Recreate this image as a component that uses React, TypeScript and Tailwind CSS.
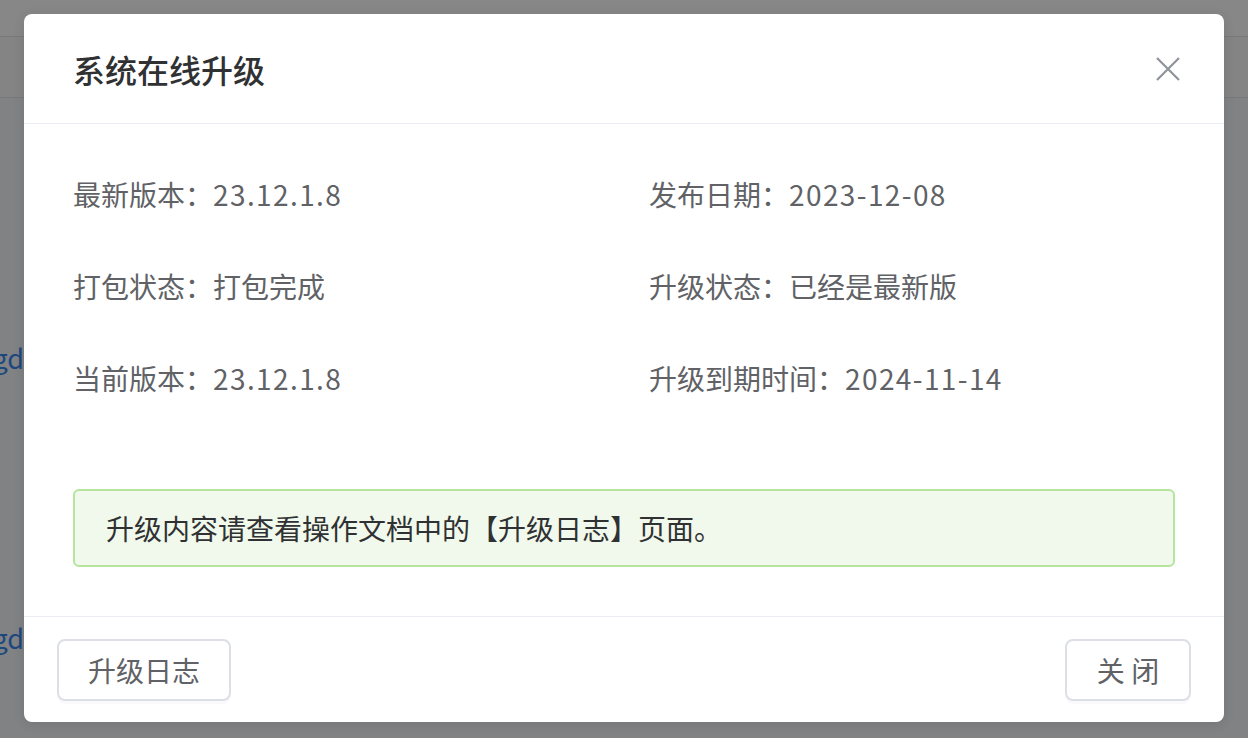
type Item = { label: string; value: string; num?: boolean };

const rows: [Item, Item][] = [
  [
    { label: "最新版本：", value: "23.12.1.8", num: true },
    { label: "发布日期：", value: "2023-12-08", num: true },
  ],
  [
    { label: "打包状态：", value: "打包完成" },
    { label: "升级状态：", value: "已经是最新版" },
  ],
  [
    { label: "当前版本：", value: "23.12.1.8", num: true },
    { label: "升级到期时间：", value: "2024-11-14", num: true },
  ],
];

const font = { fontFamily: '"Noto Sans CJK SC", "Noto Sans", sans-serif' };

function Field({ item }: { item: Item }) {
  return (
    <span>
      {item.label}
      <span className={item.num ? "tracking-[1.4px]" : ""}>{item.value}</span>
    </span>
  );
}

function PageBehind() {
  return (
    <div className="flex flex-col h-full bg-[#f4f5f7]">
      <div className="h-[37px] bg-white border-b border-[#e4e4e4]" />
      <div className="h-[61px] bg-[#fafafa] border-b border-[#e4e4e4]" />
      <div className="flex flex-col pt-[240px] text-[27px] text-[#3a86f0]">
        <div className="h-[40px] flex items-center">
          <div className="w-[24px] overflow-hidden flex justify-end whitespace-nowrap">upgd</div>
        </div>
        <div className="h-[40px] mt-[240px] flex items-center">
          <div className="w-[24px] overflow-hidden flex justify-end whitespace-nowrap">upgd</div>
        </div>
      </div>
    </div>
  );
}

export default function App() {
  return (
    <div className="relative w-[1248px] h-[738px] overflow-hidden" style={font}>
      <PageBehind />
      <div className="absolute inset-0 bg-black/[0.47] flex justify-center items-start pt-[14px]">
        <div className="w-[1200px] h-[708px] bg-white rounded-[8px] shadow-[0_2px_12px_rgba(0,0,0,0.1)] flex flex-col">
          <div className="h-[110px] flex items-center justify-between pl-[49px] pr-[44px] border-b border-[#ebeef5]">
            <h1 className="text-[32px] font-medium text-[#303133] leading-none">系统在线升级</h1>
            <svg width="24" height="24" viewBox="0 0 24 24" fill="none" stroke="#909399" strokeWidth="2.2">
              <path d="M1 1 L23 23 M23 1 L1 23" />
            </svg>
          </div>

          <div className="flex flex-col px-[49px] pt-[24px] pb-[49px] border-b border-[#ebeef5]">
            {rows.map(([a, b]) => (
              <div key={a.label} className="grid grid-cols-[576px_1fr] h-[92px] items-center text-[28px] text-[#606266]">
                <Field item={a} />
                <Field item={b} />
              </div>
            ))}
            <div className="mt-[65px] h-[78px] flex items-center px-[31px] bg-[#f0f9eb] border-2 border-[#b5e59c] rounded-[6px] text-[28px] text-[#303133]">
              升级内容请查看操作文档中的【升级日志】页面。
            </div>
          </div>

          <div className="flex justify-between px-[33px] pt-[22px]">
            <button className="w-[174px] h-[62px] border-2 border-[#dcdfe6] rounded-[8px] text-[28px] text-[#606266] bg-white shadow-[0_3px_0_rgba(0,0,0,0.02)]">
              升级日志
            </button>
            <button className="w-[126px] h-[62px] border-2 border-[#dcdfe6] rounded-[8px] text-[28px] text-[#606266] bg-white shadow-[0_3px_0_rgba(0,0,0,0.02)]">
              关 闭
            </button>
          </div>
        </div>
      </div>
    </div>
  );
}
